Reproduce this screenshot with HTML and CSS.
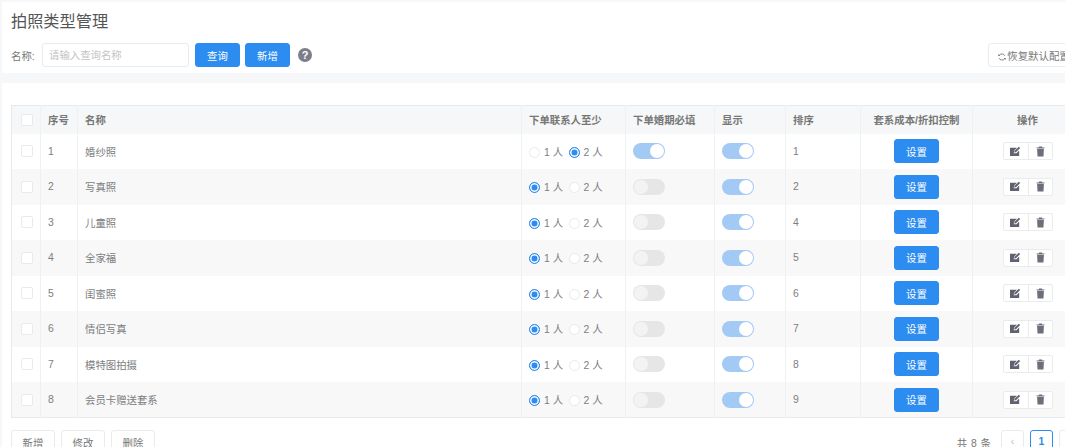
FILE: index.html
```html
<!DOCTYPE html>
<html lang="zh-CN">
<head>
    <meta charset="UTF-8">
    <title>拍照类型管理</title>
    <link rel="stylesheet" href="styles.css">
</head>
<body>
    <div class="top-card">
        <h1>拍照类型管理</h1>
        <div class="toolbar">
            <label class="field-label">名称:</label>
            <input class="search" type="text" placeholder="请输入查询名称">
            <button class="btn primary">查询</button>
            <button class="btn primary">新增</button>
            <span class="help">?</span>
            <button class="btn restore"><svg class="spin" viewBox="0 0 10 10" width="8" height="8"><path fill="none" stroke="#666" stroke-width="1" d="M8.600 3.500A4 4 0 0 0 1.600 3M1.400 6.500A4 4 0 0 0 8.400 7"/><path fill="#666" d="M0.500 1.200 3 3.600H.5zM9.500 8.800 7 6.400h2.500z"/></svg>恢复默认配置</button>
        </div>
    </div>
    <div class="main-card">
        <table class="grid">
            <colgroup>
                <col class="c-check"><col class="c-no"><col class="c-name"><col class="c-contact"><col class="c-date"><col class="c-show"><col class="c-sort"><col class="c-cost"><col class="c-ops">
            </colgroup>
            <thead>
                <tr>
                    <th><span class="check"></span></th>
                    <th>序号</th>
                    <th>名称</th>
                    <th>下单联系人至少</th>
                    <th>下单婚期必填</th>
                    <th>显示</th>
                    <th>排序</th>
                    <th class="center">套系成本/折扣控制</th>
                    <th class="center">操作</th>
                </tr>
            </thead>
            <tbody id="rows"></tbody>
        </table>
        <div class="footer">
            <div class="footer-btns">
                <button class="btn plain">新增</button>
                <button class="btn plain">修改</button>
                <button class="btn plain">删除</button>
            </div>
            <div class="pager">
                <span class="total">共 8 条</span>
                <span class="page off">‹</span>
                <span class="page current">1</span>
                <span class="page off">›</span>
            </div>
        </div>
    </div>

    <script>
        const data = [
            [1, '婚纱照', 2, true, 1],
            [2, '写真照', 1, false, 2],
            [3, '儿童照', 1, false, 4],
            [4, '全家福', 1, false, 5],
            [5, '闺蜜照', 1, false, 6],
            [6, '情侣写真', 1, false, 7],
            [7, '模特图拍摄', 1, false, 8],
            [8, '会员卡赠送套系', 1, false, 9]
        ];

        const editIcon = '<svg viewBox="0 0 12 12" width="11" height="11"><path fill="#60636f" d="M0 2h7.500L4.600 5 4 8h3l3-3v6H0z"/><path fill="#60636f" d="M5 5.300 9.600.8l1.500 1.500-4.600 4.600-1.900.3z"/></svg>';
        const trashIcon = '<svg viewBox="0 0 10 12" width="9" height="11"><path fill="#6c6f7a" d="M3.400.5h3.200l.5 1h2.400v1H.5v-1h2.400zM1.200 3h7.600l-.5 8.500H1.700z"/></svg>';

        function radio(on, text) {
            return `<span class="radio ${on ? 'on' : ''}"></span><span class="radio-text">${text}</span>`;
        }

        document.getElementById('rows').innerHTML = data.map(d => `
            <tr>
                <td><span class="check"></span></td>
                <td>${d[0]}</td>
                <td>${d[1]}</td>
                <td>${radio(d[2] === 1, '1 人')}${radio(d[2] === 2, '2 人')}</td>
                <td><span class="switch ${d[3] ? 'on' : ''}"></span></td>
                <td><span class="switch on"></span></td>
                <td>${d[4]}</td>
                <td class="center"><button class="btn primary setting">设置</button></td>
                <td class="center"><span class="ops"><span class="op">${editIcon}</span><span class="op">${trashIcon}</span></span></td>
            </tr>`).join('');
    </script>
</body>
</html>
```

FILE: styles.css
```css
* {
    box-sizing: border-box;
}

html, body {
    height: 447px;
    overflow: hidden;
}

body {
    margin: 0;
    background-color: #f5f7f8;
    font-family: "Liberation Sans", "Noto Sans CJK SC", sans-serif;
    font-size: 10.4px;
    color: #777;
}

.top-card {
    background-color: #fff;
    margin: 2px 0 0 2px;
    height: 71px;
    padding: 9px 0 0 9px;
    overflow: hidden;
}

h1 {
    margin: 0;
    font-size: 16.2px;
    line-height: 20px;
    font-weight: 400;
    color: #555;
}

.toolbar {
    display: flex;
    align-items: center;
    margin-top: 12px;
    width: 1090px;
}

.field-label {
    width: 31px;
    color: #777;
}

.search {
    width: 147px;
    height: 24px;
    padding: 0 6px;
    border: 1px solid #e8eaec;
    border-radius: 3px;
    font: inherit;
}

.search::placeholder {
    color: #c4c4c4;
}

.btn {
    height: 24px;
    padding: 0;
    border: 1px solid #e9ebed;
    border-radius: 3px;
    background-color: #fff;
    font: inherit;
    color: #777;
}

.btn.primary {
    width: 45px;
    margin-left: 6px;
    border-color: #2d8cf0;
    background-color: #2d8cf0;
    color: #fff;
}

.toolbar .btn.primary + .btn.primary {
    margin-left: 5px;
}

.help {
    width: 14px;
    height: 14px;
    margin-left: 8px;
    border-radius: 50%;
    background-color: #7d7e8a;
    color: #fff;
    font-size: 11px;
    font-weight: 700;
    line-height: 14px;
    text-align: center;
}

.restore {
    width: 92px;
    margin-left: 676px;
    white-space: nowrap;
}

.spin {
    margin-right: 1px;
    vertical-align: -1px;
}

.main-card {
    background-color: #fff;
    margin: 10px 0 0 2px;
    height: 364px;
    padding: 22px 0 0 9px;
}

.grid {
    width: 1071px;
    table-layout: fixed;
    border-collapse: collapse;
    border: 1px solid #e7eaec;
}

.c-check { width: 29px; }
.c-no { width: 37px; }
.c-name { width: 444px; }
.c-contact { width: 104px; }
.c-date { width: 89px; }
.c-show { width: 71px; }
.c-sort { width: 75px; }
.c-cost { width: 112px; }
.c-ops { width: 110px; }

th, td {
    padding: 0 0 0 7px;
    border-left: 1px solid #eef0f2;
    text-align: left;
    white-space: nowrap;
}

th:first-child, td:first-child {
    padding: 0 0 0 9px;
    border-left: 0;
}

th {
    height: 28px;
    background-color: #f6f7f8;
    font-weight: 700;
    color: #777;
}

td {
    height: 35.5px;
    color: #7c7e80;
}

tbody tr:nth-child(even) td {
    background-color: #f8f8f8;
}

th.center, td.center {
    padding: 0;
    text-align: center;
}

.check {
    display: block;
    width: 12px;
    height: 12px;
    border: 1px solid #e8eaec;
    border-radius: 2px;
    background-color: #fff;
}

.radio {
    display: inline-block;
    width: 11px;
    height: 11px;
    border: 1px solid #e8eaec;
    border-radius: 50%;
    background-color: #fff;
    vertical-align: -2px;
}

.radio.on {
    border-color: #2d8cf0;
    background-color: #2d8cf0;
    box-shadow: inset 0 0 0 1.5px #fff;
}

.radio-text {
    margin: 0 5.5px 0 4px;
}

.switch {
    display: block;
    position: relative;
    width: 32px;
    height: 16px;
    border-radius: 8px;
    background-color: #e6e6e6;
}

.switch::after {
    content: "";
    position: absolute;
    left: 1px;
    top: 1px;
    width: 14px;
    height: 14px;
    border-radius: 50%;
    background-color: #f3f3f3;
}

.switch.on {
    background-color: #a3c9f5;
}

.switch.on::after {
    left: 17px;
    background-color: #fff;
}

.setting {
    width: 45px;
    height: 24px;
    vertical-align: middle;
}

td .btn.setting {
    margin-left: 0;
}

.ops {
    display: inline-flex;
    vertical-align: middle;
    border: 1px solid #e9ebed;
    border-radius: 2px;
    background-color: #fff;
}

.op {
    display: flex;
    align-items: center;
    justify-content: center;
    width: 24px;
    height: 16px;
}

.op + .op {
    border-left: 1px solid #e9ebed;
}

.footer {
    display: flex;
    justify-content: space-between;
    margin-top: 12px;
    width: 1071px;
}

.footer-btns {
    display: flex;
    gap: 6px;
}

.plain {
    width: 44px;
    height: 24px;
}

.pager {
    display: flex;
    align-items: center;
    height: 24px;
    margin-right: -6px;
}

.total {
    margin-right: 10px;
    word-spacing: 1px;
}

.page {
    width: 23px;
    height: 24px;
    margin-right: 6px;
    border: 1px solid #e9ebed;
    border-radius: 3px;
    line-height: 22px;
    text-align: center;
    background-color: #fff;
}

.page.off {
    color: #bbb;
}

.page.current {
    border-color: #2d8cf0;
    color: #2d8cf0;
    font-weight: 700;
}
```
